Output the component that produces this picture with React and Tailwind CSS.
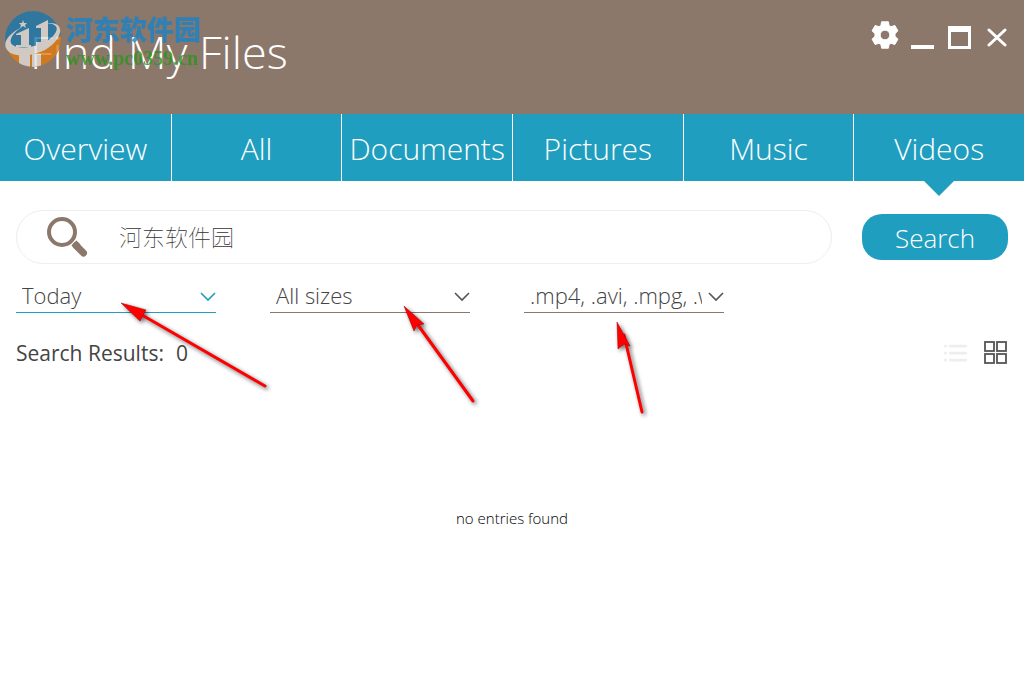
import { useState } from "react";

const TABS = ["Overview", "All", "Documents", "Pictures", "Music", "Videos"];

const FILTERS = [
  { id: "date", label: "Date", options: ["Today", "This week", "This month"] },
  { id: "size", label: "Size", options: ["All sizes", "Small", "Large"] },
  { id: "type", label: "File type", options: [".mp4, .avi, .mpg, .wmv", ".mp4", ".avi"] },
];

// --- Icons ---
function GearIcon() {
  return (
    <svg viewBox="0 0 28 29" className="w-7 h-7" fill="currentColor" aria-hidden="true">
      <path
        fillRule="evenodd"
        stroke="currentColor"
        strokeLinejoin="round"
        d="M10.5 0.8h7l.8 4 1.9 1.1 4-1.3 3.200 5.600-3 2.900v2.800l3 2.900-3.200 5.600-4-1.300-1.900 1.100-.8 4h-7l-.8-4-1.900-1.100-4 1.300-3.200-5.600 3-2.900v-2.800l-3-2.900 3.200-5.600 4 1.300 1.900-1.100zM14 9.500a5 5 0 1 0 0 10 5 5 0 0 0 0-10z"
      />
    </svg>
  );
}

function MagnifierIcon() {
  return (
    <svg viewBox="0 0 42 42" className="w-[42px] h-[42px] shrink-0 text-[#8c776b]" aria-hidden="true">
      <circle cx="15" cy="16" r="13" fill="none" stroke="currentColor" strokeWidth="4" />
      <path d="M29 29.500l7.500 7.500" stroke="currentColor" strokeWidth="7" strokeLinecap="round" />
      <path d="M24.500 29.500l5-5 4 4-5 5z" fill="currentColor" />
    </svg>
  );
}

function ListIcon() {
  return (
    <svg viewBox="0 0 24 18" className="w-6 h-[18px]" fill="currentColor" aria-hidden="true">
      <circle cx="1.500" cy="2" r="1.500" />
      <circle cx="1.500" cy="9" r="1.500" />
      <circle cx="1.500" cy="16" r="1.500" />
      <rect x="5" y="0.800" width="18" height="2.600" rx="1.300" />
      <rect x="5" y="7.800" width="18" height="2.600" rx="1.300" />
      <rect x="5" y="14.800" width="18" height="2.600" rx="1.300" />
    </svg>
  );
}

function GridIcon() {
  return (
    <svg viewBox="0 0 24 24" className="w-6 h-6" fill="none" stroke="currentColor" strokeWidth="1.800" aria-hidden="true">
      <rect x="1" y="1" width="9" height="9" />
      <rect x="13" y="1" width="9" height="9" />
      <rect x="1" y="13" width="9" height="9" />
      <rect x="13" y="13" width="9" height="9" />
    </svg>
  );
}

// --- Site watermark over the title ---
function Watermark() {
  return (
    <div className="absolute left-1 top-2 flex gap-1 opacity-80 pointer-events-none">
      <svg viewBox="0 0 58 60" className="w-[58px] h-[60px]" aria-hidden="true">
        <defs>
          <clipPath id="globe">
            <circle cx="29" cy="31" r="28" />
          </clipPath>
        </defs>
        <g clipPath="url(#globe)">
          <path d="M0 0h58v60H0z" fill="#1a78ac" />
          <path d="M0 40Q30 54 58 26V60H0z" fill="#e07b12" />
          <path d="M15 46h11v14H15zM28 46h9v14h-9z" fill="#e3dedb" />
        </g>
        {/* orbit ring */}
        <path
          d="M18 19C6 25-1 33 2 40c5 12 34 9 47-4 10-10 10-21-3-21-1 0-2 0-3 .5 9 0 12 4 8 10-7 12-36 18-43 11-4-4 1-12 10-17.500z"
          fill="#e3dedb"
        />
        {/* towers */}
        <path d="M12 26l13-6v17h2v2H12v-2h5V27h-5z" fill="#e3dedb" />
        <path d="M32 18l12-6v22h2v3H32v-3h5V20h-5z" fill="#e3dedb" />
        <path d="M19 12l1 3h3l-2 2 1 3-3-2-3 2 1-3-2-2h3z" fill="#e3dedb" />
      </svg>
      <div className="whitespace-nowrap">
        <p className="pt-1 font-['Noto_Sans_CJK_SC',sans-serif] text-[27px] leading-[34px] font-black text-[#1b83c5]">河东软件园</p>
        <p className="font-['Liberation_Serif',serif] text-[20px] leading-6 font-bold text-[#2c9420]">www.pc0359.cn</p>
      </div>
    </div>
  );
}

function FilterSelect({ filter, active, onFocus }) {
  return (
    <div
      className={`relative w-[200px] border-b ${active ? "border-[#209ec0] text-[#209ec0]" : "border-[#8c776b] text-[#555]"}`}
    >
      <select
        aria-label={filter.label}
        onFocus={onFocus}
        className="block w-full h-8 appearance-none bg-transparent pl-1.5 pr-[22px] pb-0.5 text-[22px] leading-[30px] font-light text-[#444] outline-none"
      >
        {filter.options.map((o) => (
          <option key={o}>{o}</option>
        ))}
      </select>
      <svg
        viewBox="0 0 16 10"
        className="absolute right-0 top-3 w-4 h-2.5 pointer-events-none"
        fill="none"
        stroke="currentColor"
        strokeWidth="1.600"
        aria-hidden="true"
      >
        <path d="M1 1l7 7 7-7" />
      </svg>
    </div>
  );
}

// --- Red pointers to the three filters ---
function Pointers() {
  return (
    <svg
      viewBox="0 0 560 140"
      className="absolute left-[110px] top-[290px] w-[560px] h-[140px] pointer-events-none drop-shadow-[2px_2px_2px_rgba(0,0,0,0.6)]"
      fill="#fe0000"
      stroke="#fe0000"
      aria-hidden="true"
    >
      <g strokeWidth="3" strokeLinecap="round">
        <path d="M32 25L155 96" />
        <path d="M308 35L363 111" />
        <path d="M514 45L532 122" />
      </g>
      <g stroke="#a00000" strokeWidth="0.500">
        <path d="M11 13L36 20 33 25 30 31z" />
        <path d="M294 16L314 34 307 35 304 41z" />
        <path d="M507 32L520 56 514 54 508 59z" />
      </g>
    </svg>
  );
}

export default function App() {
  const [tab, setTab] = useState("Videos");
  const [query, setQuery] = useState("河东软件园");
  const [activeFilter, setActiveFilter] = useState("date");

  return (
    <div className="relative min-h-screen bg-white font-['Open_Sans',sans-serif]">
      <header className="relative flex h-[114px] items-start justify-between bg-[#8c776b] text-white">
        <h1 className="pl-[30px] pt-5 text-[45px] leading-[64px] font-light">Find My Files</h1>
        <Watermark />
        <div className="flex items-end gap-3 pt-[21px] pr-[17px]">
          <button aria-label="Settings" className="h-7">
            <GearIcon />
          </button>
          <button aria-label="Minimize" className="h-7 w-[23px] flex items-end">
            <span className="h-1 w-full bg-white"></span>
          </button>
          <button aria-label="Maximize" className="ml-0.5 h-[23px] w-[23px] border-[3px] border-t-[6px] border-white"></button>
          <button aria-label="Close" className="pl-1">
            <svg viewBox="0 0 20 20" className="w-5 h-6" stroke="currentColor" strokeWidth="3" strokeLinecap="round" aria-hidden="true">
              <path d="M2 3l16 15M18 3L2 18" />
            </svg>
          </button>
        </div>
      </header>

      <nav className="grid grid-cols-6 bg-[#209ec0] text-white">
        {TABS.map((t) => (
          <button
            key={t}
            onClick={() => setTab(t)}
            className="relative h-[67px] border-l border-white first:border-l-0 pt-0.5 text-[30px] leading-10 font-light"
          >
            {t}
            {tab === t && (
              <span className="absolute left-1/2 top-full -translate-x-1/2 border-x-[15px] border-t-[15px] border-x-transparent border-t-[#209ec0]"></span>
            )}
          </button>
        ))}
      </nav>

      <main className="px-4 pt-[29px]">
        <form onSubmit={(e) => e.preventDefault()} className="flex items-center gap-[30px]">
          <label className="flex flex-1 h-[54px] items-center gap-[30px] rounded-full border border-[#eee] pl-[30px] pr-6">
            <MagnifierIcon />
            <input
              type="text"
              aria-label="Search files"
              value={query}
              onChange={(e) => setQuery(e.target.value)}
              className="min-w-0 flex-1 pb-0.5 font-['Noto_Sans_CJK_SC',sans-serif] text-[23px] leading-9 font-thin text-[#333] outline-none"
            />
          </label>
          <button className="h-[46px] w-[146px] rounded-[20px] bg-[#209ec0] pt-0.5 text-[26px] leading-10 font-light text-white">
            Search
          </button>
        </form>

        <div className="flex gap-[54px] pt-4">
          {FILTERS.map((f) => (
            <FilterSelect key={f.id} filter={f} active={activeFilter === f.id} onFocus={() => setActiveFilter(f.id)} />
          ))}
        </div>

        <div className="flex items-center justify-between pt-6">
          <p className="flex gap-3 text-[21px] leading-8 text-[#444]">
            <span>Search Results:</span>
            <span>0</span>
          </p>
          <div className="flex items-center gap-4">
            <button aria-label="List view" className="text-[#eee]">
              <ListIcon />
            </button>
            <button aria-label="Grid view" className="text-[#555]">
              <GridIcon />
            </button>
          </div>
        </div>

        <p className="pt-[137px] text-center text-[15px] leading-6 font-light text-black">no entries found</p>
      </main>

      <Pointers />
    </div>
  );
}
